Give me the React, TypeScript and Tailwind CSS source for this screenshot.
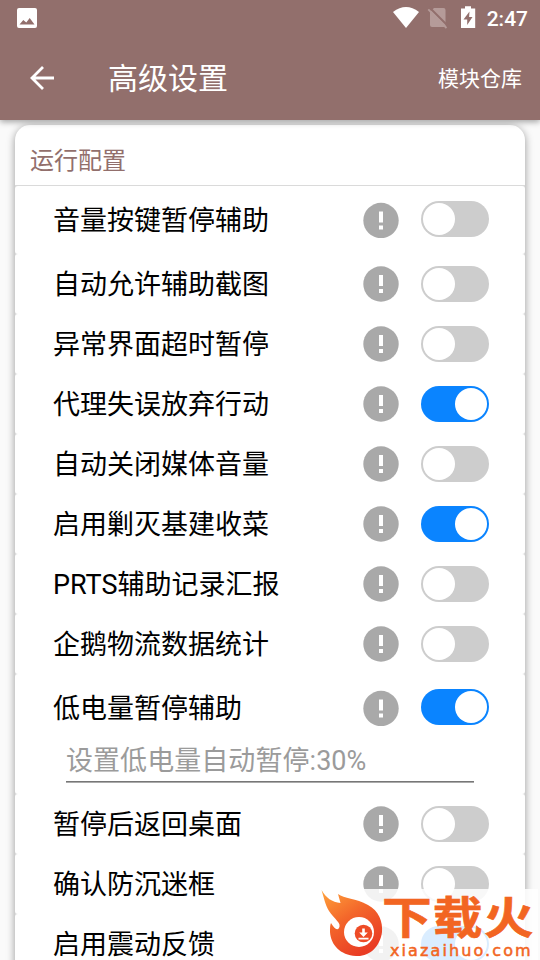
import React from "react";

type Row = { label: string; on: boolean; hint?: string; tall?: boolean };

const rows: Row[] = [
  { label: "音量按键暂停辅助", on: false, tall: true },
  { label: "自动允许辅助截图", on: false },
  { label: "异常界面超时暂停", on: false },
  { label: "代理失误放弃行动", on: true },
  { label: "自动关闭媒体音量", on: false },
  { label: "启用剿灭基建收菜", on: true },
  { label: "PRTS辅助记录汇报", on: false },
  { label: "企鹅物流数据统计", on: false },
  { label: "低电量暂停辅助", on: true, hint: "设置低电量自动暂停:30%" },
  { label: "暂停后返回桌面", on: false },
  { label: "确认防沉迷框", on: false },
  { label: "启用震动反馈", on: true },
];

function Switch({ on }: { on: boolean }) {
  return (
    <div
      className={
        on
          ? "flex h-9 w-17 items-center justify-end rounded-full bg-[#0a84ff] px-0.5"
          : "flex h-9 w-17 items-center justify-start rounded-full bg-[#cdcdcd] px-0.5"
      }
    >
      <div className="h-8 w-8 rounded-full bg-white" />
    </div>
  );
}

function InfoIcon({ raised }: { raised: boolean }) {
  return (
    <svg width="36" height="36" viewBox={raised ? "0 -0.5 36 36" : "0 0 36 36"} className="shrink-0">
      <circle cx="18" cy="18" r="17.7" fill="#a9a9a9" />
      <path d="M16 9h4v11h-4zM16 23h4v4h-4z" fill="#fff" />
    </svg>
  );
}

function SettingRow({ row }: { row: Row }) {
  const raised = Boolean(row.tall || row.hint);
  return (
    <div className={row.hint ? "h-[120px] rounded-[3px] bg-white" : row.tall ? "h-[68px] rounded-[3px] bg-white" : "h-[60px] rounded-[3px] bg-white"}>
      <div className={raised ? "flex h-[68px] items-center pr-9 pl-[38px]" : "flex h-[60px] items-center pr-9 pl-[38px]"}>
        <span className="flex-1 pt-0.5 text-[27px] leading-[40px] whitespace-nowrap text-black">{row.label}</span>
        <InfoIcon raised={raised} />
        <div className={raised ? "ml-[22px] pb-0.5" : "ml-[22px]"}>
          <Switch on={row.on} />
        </div>
      </div>
      {row.hint && (
        <div className="mx-[51px] h-10 border-b border-[#777] pt-px text-[27px] leading-[36px] tracking-[0.06px] whitespace-nowrap text-[#9b9b9b] shadow-[0_1px_0_#aaa]">
          {row.hint}
        </div>
      )}
    </div>
  );
}

function StatusBar() {
  return (
    <div className="flex h-9 items-center pr-[12px] pl-[17px] text-white">
      <svg width="20" height="20" viewBox="0 0 20 20">
        <path fillRule="evenodd" fill="#fff" d="M2 0h16a2 2 0 0 1 2 2v16a2 2 0 0 1-2 2H2a2 2 0 0 1-2-2V2a2 2 0 0 1 2-2ZM2.5 16.5h15L12.7 10l-3.4 4.5-3-2.5Z" />
      </svg>
      <svg width="83" height="24" viewBox="0 0 83 24" className="ml-auto">
        <path d="M0 6Q13-4 26 6L13 22Z" fill="#fff" />
        <path d="M41 2h9.500q2 0 2 2v17H39q-2 0-2-2V6Z" fill="#b59b99" />
        <path d="M36 1 55 20" stroke="#926f6c" strokeWidth="2" />
        <path d="M35.300 3.300 53.500 22" stroke="#b59b99" strokeWidth="1.800" />
        <path fillRule="evenodd" fill="#fff" d="M72 0.300h6v2.200h4.200V22H68V2.500h4ZM76.500 5.500 70.500 13.500h3.700v5.500L79.500 11h-3.400Z" />
      </svg>
      <span className="ml-[11px] pt-0.5 font-['Roboto'] text-[21px] leading-6 font-medium">2:47</span>
    </div>
  );
}

function Watermark() {
  return (
    <div className="absolute top-[889px] left-[321px] h-[71px] w-[217px] overflow-hidden bg-white/85">
      <svg width="217" height="71" viewBox="0 0 217 71" className="absolute top-0 left-0">
        <defs>
          <linearGradient id="flame" x1="0" y1="0" x2=".6" y2="1">
            <stop offset="0" stopColor="#ffa33b" />
            <stop offset=".5" stopColor="#f3652a" />
            <stop offset="1" stopColor="#e93c24" />
          </linearGradient>
        </defs>
        <path fill="url(#flame)" d="M0.500 1C5 9 11 13 19.500 14L17 5C23 10 35 9 47 16C58 22 62 33 61 43C59 58 48 68 35 67C19 66 10 56 9 43C9 39 9 36 10 34C13 39 16 42 18 39C21 34 13 30 8 22C4 15 3 9 0.500 1Z" />
        <circle cx="38" cy="43" r="15" fill="#fff" />
        <circle cx="42.500" cy="44.500" r="8.800" fill="#ee4b26" />
        <path d="M41.200 39.500h2.600v4h3L42.500 48 38.200 43.500h3ZM37.500 48.800h10v1.800H37.500Z" fill="#fff" />
      </svg>
      <div className="flex flex-col pt-3 pl-[61px] text-[#f26522]">
        <span className="h-10 w-[144px] origin-left scale-x-[1.130] text-[44px] leading-[37px] font-bold tracking-[1px] whitespace-nowrap [-webkit-text-stroke:0.6px_#f26522]">下载火</span>
        <span className="h-[19px] pt-px pl-2 font-['DejaVu_Sans'] text-[16px] leading-[18px] tracking-[2.100px] whitespace-nowrap [-webkit-text-stroke:0.5px_#f26522]">xiazaihuo.com</span>
      </div>
    </div>
  );
}

export default function App() {
  return (
    <div className="relative h-[960px] w-[540px] overflow-hidden bg-[#fafafa] font-['Roboto','Noto_Sans_CJK_SC',sans-serif]">
      <header className="relative z-10 h-[120px] bg-[#926f6c] shadow-[0_2px_6px_rgba(0,0,0,0.35)]">
        <StatusBar />
        <div className="flex h-[84px] items-center pr-[18px] pl-[30px] text-white">
          <svg width="24" height="24" viewBox="0 0 24 24" fill="none" stroke="#fff" strokeWidth="2.800">
            <path d="M24 12H2M13 1 2 12l11 11" />
          </svg>
          <h1 className="ml-[54px] pt-0.5 text-[30px] leading-[44px]">高级设置</h1>
          <span className="ml-auto pt-0.5 text-[21px] leading-[30px]">模块仓库</span>
        </div>
      </header>
      <main className="mx-[15px] mt-[5px] h-[900px] overflow-hidden rounded-[15px] bg-white shadow-[0_2px_9px_rgba(0,0,0,0.4)]">
        <h2 className="h-[60px] pt-[18px] pl-[15px] text-[24px] leading-[36px] text-[#926f6c]">运行配置</h2>
        <div className="bg-[#dadada] pt-px">
          {rows.map((row) => (
            <SettingRow key={row.label} row={row} />
          ))}
        </div>
      </main>
      <Watermark />
    </div>
  );
}
